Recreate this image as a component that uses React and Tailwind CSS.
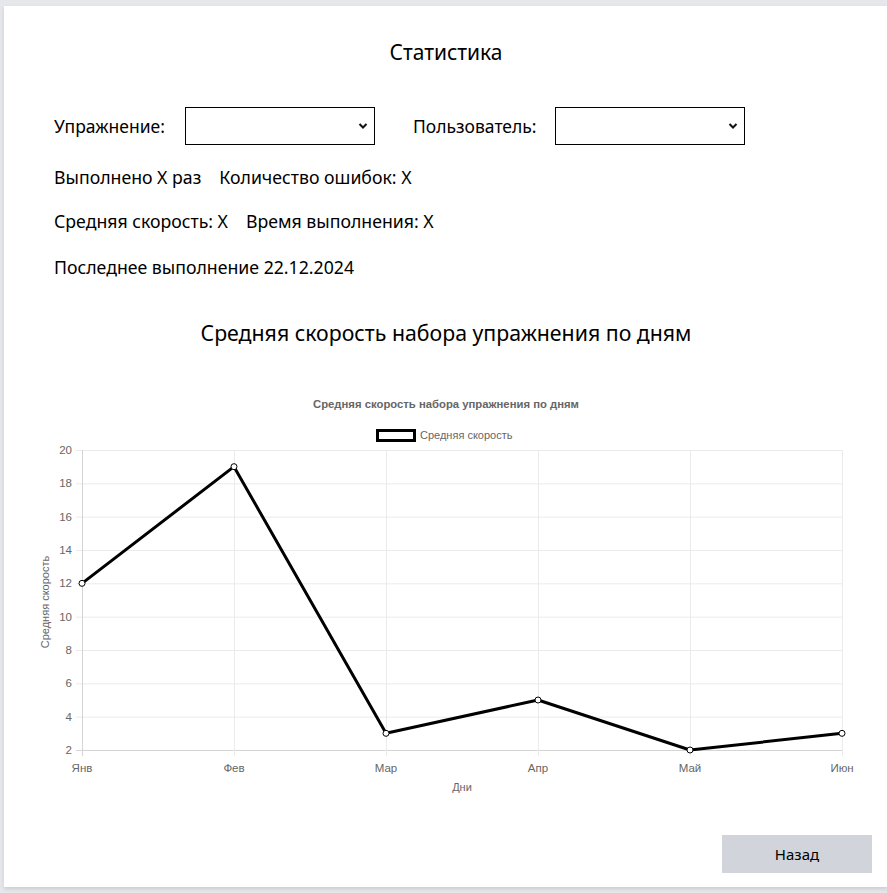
import React from 'react';

const DATA = [
  { label: 'Янв', value: 12 },
  { label: 'Фев', value: 19 },
  { label: 'Мар', value: 3 },
  { label: 'Апр', value: 5 },
  { label: 'Май', value: 2 },
  { label: 'Июн', value: 3 },
];

// координаты графика внутри svg
const LEFT = 78;
const RIGHT = 838;
const TOP = 70;
const BOTTOM = 370;
const MIN = 2;
const MAX = 20;

const xAt = (i) => LEFT + (i * (RIGHT - LEFT)) / (DATA.length - 1);
const yAt = (v) => BOTTOM - ((v - MIN) * (BOTTOM - TOP)) / (MAX - MIN);

const SpeedChart = () => {
  const ticks = [];
  for (let v = MIN; v <= MAX; v += 2) ticks.push(v);
  const points = DATA.map((d, i) => `${xAt(i)},${yAt(d.value)}`).join(' ');

  return (
    <svg width="884" height="420" className="block" style={{ fontFamily: '"Liberation Sans", Arial, sans-serif' }}>
      <text x="442" y="28" textAnchor="middle" fontSize="11.3" fontWeight="bold" fill="#666">
        Средняя скорость набора упражнения по дням
      </text>

      {/* legend */}
      <rect x="373.5" y="50.5" width="37" height="10" fill="#fff" stroke="#000" strokeWidth="3" />
      <text x="416" y="59" fontSize="11" fill="#666">Средняя скорость</text>

      {/* grid */}
      {ticks.map((v) => (
        <g key={v}>
          <line x1={LEFT - 6} x2={RIGHT} y1={yAt(v) + 0.5} y2={yAt(v) + 0.5} stroke={v === MIN ? '#d4d4d4' : '#ebebeb'} />
          <text x={LEFT - 10} y={yAt(v) + 4} textAnchor="end" fontSize="11.5" fill="#666">{v}</text>
        </g>
      ))}
      {DATA.map((d, i) => (
        <g key={d.label}>
          <line x1={xAt(i) + 0.5} x2={xAt(i) + 0.5} y1={TOP} y2={BOTTOM + 6} stroke={i === 0 ? '#d4d4d4' : '#ebebeb'} />
          <text x={xAt(i)} y={BOTTOM + 22} textAnchor="middle" fontSize="11.5" fill="#666">{d.label}</text>
        </g>
      ))}

      <text x="458" y={BOTTOM + 41} textAnchor="middle" fontSize="11" fill="#666">Дни</text>
      <text
        x="0"
        y="0"
        transform={`translate(45 ${(TOP + BOTTOM) / 2 + 2}) rotate(-90)`}
        textAnchor="middle"
        fontSize="11"
        fill="#666"
      >
        Средняя скорость
      </text>

      <polyline points={points} fill="none" stroke="#000" strokeWidth="3" strokeLinejoin="round" />
      {DATA.map((d, i) => (
        <circle key={d.label} cx={xAt(i)} cy={yAt(d.value)} r="3" fill="#fff" stroke="#000" strokeWidth="1" />
      ))}
    </svg>
  );
};

const Select = () => (
  <div className="relative w-[190px] h-[38px] border border-black bg-white">
    <svg className="absolute right-[6px] top-[14px]" width="10" height="8" viewBox="0 0 10 8">
      <path d="M1.5 2 L5 5.5 L8.5 2" fill="none" stroke="#111" strokeWidth="2" />
    </svg>
  </div>
);

export default function App() {
  return (
    <div
      className="w-[887px] h-[893px] overflow-hidden bg-[#e5e7eb] text-black"
      style={{ fontFamily: '"Noto Sans", "Open Sans", sans-serif' }}
    >
      <div className="ml-[4px] mt-[6px] w-[884px] h-[881px] bg-white shadow-[0_2px_4px_rgba(0,0,0,0.12)] pt-[31px] flex flex-col">
        <h1 className="text-center text-[21px] leading-[30px]">Статистика</h1>

        <div className="mt-[40px] pl-[50px] flex items-center h-[38px] text-[17.5px]">
          <span className="w-[131px]">Упражнение:</span>
          <Select />
          <span className="ml-[38px] w-[142px]">Пользователь:</span>
          <Select />
        </div>

        <div className="pl-[50px] text-[17.7px] leading-[24px]">
          <div className="mt-[20px] flex gap-[18px]">
            <span>Выполнено X раз</span>
            <span>Количество ошибок: X</span>
          </div>
          <div className="mt-[20px] flex gap-[18px]">
            <span>Средняя скорость: X</span>
            <span>Время выполнения: X</span>
          </div>
          <div className="mt-[22px]">Последнее выполнение 22.12.2024</div>
        </div>

        <h2 className="mt-[39px] text-center text-[21.3px] leading-[30px]">
          Средняя скорость набора упражнения по дням
        </h2>

        <div className="mt-[32px]">
          <SpeedChart />
        </div>

        <div className="mt-[35px] flex justify-end pr-[16px]">
          <button className="w-[150px] h-[38px] bg-[#d1d5db] text-[15px]">Назад</button>
        </div>
      </div>
    </div>
  );
}
